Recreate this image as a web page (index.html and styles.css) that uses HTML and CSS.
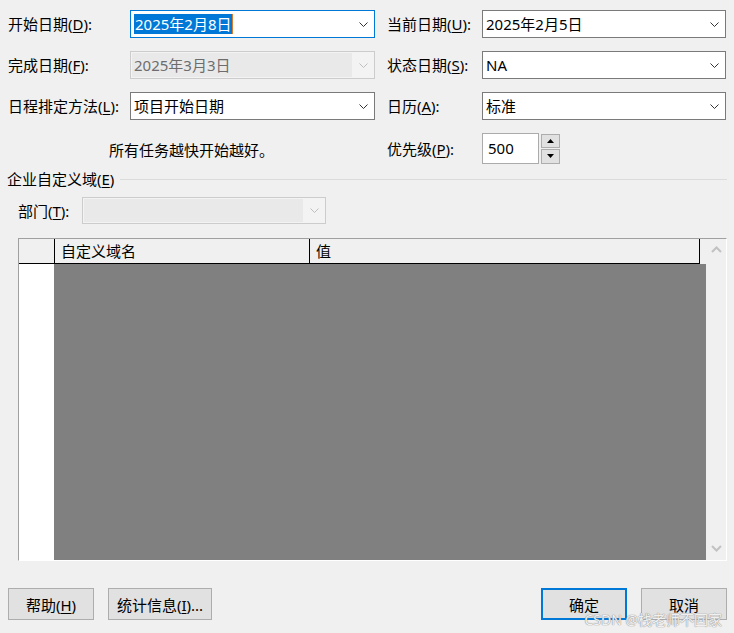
FILE: index.html
```html
<!DOCTYPE html>
<html lang="zh-CN">
  <head>
    <meta charset="UTF-8" />
    <meta name="viewport" content="width=device-width, initial-scale=1.0" />
    <title>项目信息</title>
    <link rel="stylesheet" href="styles.css">
  </head>
  <body>
    <div class="dialog">
      <div class="form-grid">
        <label class="lbl">开始日期(<u>D</u>):</label>
        <div class="combo focused">
          <span class="val"><span class="sel">2025年2月8日</span></span>
          <span class="arrow"><svg width="9" height="5" viewBox="0 0 9 5"><path d="M0.5 0.5 L4.5 4.5 L8.5 0.5" fill="none" stroke="#333" stroke-width="1"/></svg></span>
        </div>
        <label class="lbl right">当前日期(<u>U</u>):</label>
        <div class="combo">
          <span class="val">2025年2月5日</span>
          <span class="arrow"><svg width="9" height="5" viewBox="0 0 9 5"><path d="M0.5 0.5 L4.5 4.5 L8.5 0.5" fill="none" stroke="#333" stroke-width="1"/></svg></span>
        </div>

        <label class="lbl">完成日期(<u>F</u>):</label>
        <div class="combo disabled">
          <span class="val">2025年3月3日</span>
          <span class="arrow"><svg width="9" height="5" viewBox="0 0 9 5"><path d="M0.5 0.5 L4.5 4.5 L8.5 0.5" fill="none" stroke="#bfbfbf" stroke-width="1"/></svg></span>
        </div>
        <label class="lbl right">状态日期(<u>S</u>):</label>
        <div class="combo">
          <span class="val">NA</span>
          <span class="arrow"><svg width="9" height="5" viewBox="0 0 9 5"><path d="M0.5 0.5 L4.5 4.5 L8.5 0.5" fill="none" stroke="#333" stroke-width="1"/></svg></span>
        </div>

        <label class="lbl">日程排定方法(<u>L</u>):</label>
        <div class="combo">
          <span class="val">项目开始日期</span>
          <span class="arrow"><svg width="9" height="5" viewBox="0 0 9 5"><path d="M0.5 0.5 L4.5 4.5 L8.5 0.5" fill="none" stroke="#333" stroke-width="1"/></svg></span>
        </div>
        <label class="lbl right">日历(<u>A</u>):</label>
        <div class="combo">
          <span class="val">标准</span>
          <span class="arrow"><svg width="9" height="5" viewBox="0 0 9 5"><path d="M0.5 0.5 L4.5 4.5 L8.5 0.5" fill="none" stroke="#333" stroke-width="1"/></svg></span>
        </div>

        <div class="hint">所有任务越快开始越好。</div>
        <label class="lbl right">优先级(<u>P</u>):</label>
        <div class="spin-wrap">
          <div class="spin-input">500</div>
          <div class="spin-btns">
            <span class="spin-btn"><svg width="7" height="4" viewBox="0 0 7 4"><path d="M0 4 L3.5 0 L7 4 Z" fill="#000"/></svg></span>
            <span class="spin-btn"><svg width="7" height="4" viewBox="0 0 7 4"><path d="M0 0 L3.5 4 L7 0 Z" fill="#000"/></svg></span>
          </div>
        </div>
      </div>

      <div class="group-head">
        <span>企业自定义域(<u>E</u>)</span>
        <span class="group-line"></span>
      </div>

      <div class="dept-row">
        <label class="lbl dept-lbl">部门(<u>T</u>):</label>
        <div class="combo disabled dept">
          <span class="val"></span>
          <span class="arrow"><svg width="9" height="5" viewBox="0 0 9 5"><path d="M0.5 0.5 L4.5 4.5 L8.5 0.5" fill="none" stroke="#bfbfbf" stroke-width="1"/></svg></span>
        </div>
      </div>

      <div class="grid-box">
        <div class="grid-main">
          <div class="grid-head">
            <span class="hcell rowhead"></span>
            <span class="hcell col-name">自定义域名</span>
            <span class="hcell col-value">值</span>
            <span class="hcell filler"></span>
          </div>
          <div class="grid-body">
            <div class="body-rowhead"></div>
            <div class="body-fill"></div>
          </div>
        </div>
        <div class="vscroll">
          <svg width="11" height="7" viewBox="0 0 11 7"><path d="M1 6 L5.5 1.5 L10 6" fill="none" stroke="#c2c2c2" stroke-width="2"/></svg>
          <svg width="11" height="7" viewBox="0 0 11 7"><path d="M1 1 L5.5 5.5 L10 1" fill="none" stroke="#c2c2c2" stroke-width="2"/></svg>
        </div>
      </div>

      <div class="button-bar">
        <div class="btn-group">
          <button class="btn">帮助(<u>H</u>)</button>
          <button class="btn wide">统计信息(<u>I</u>)...</button>
        </div>
        <div class="btn-group">
          <button class="btn default">确定</button>
          <button class="btn">取消</button>
        </div>
      </div>

      <div class="watermark">CSDN @栈老师不回家</div>
    </div>
  </body>
</html>
```

FILE: styles.css
```css
:root {
  --dialog-bg: #f0f0f0;
  --border-dark: #7a7a7a;
  --border-disabled: #cccccc;
  --button-bg: #e1e1e1;
  --button-border: #adadad;
  --accent: #0078d7;
  --grid-gray: #808080;
}

* {
  box-sizing: border-box;
}

body {
  margin: 0;
  width: 734px;
  height: 633px;
  overflow: hidden;
  background-color: var(--dialog-bg);
  font-family: "Noto Sans", "Noto Sans CJK SC", sans-serif;
  font-size: 15px;
  color: #000;
}

.dialog {
  position: relative;
  height: 633px;
  padding: 10px 7px 0 8px;
}

u {
  text-decoration: underline;
  text-underline-offset: 2px;
}

.form-grid {
  display: grid;
  grid-template-columns: 122px 245px 107px 244px;
  grid-template-rows: 28px 28px 28px 31px;
  row-gap: 13px;
  align-items: center;
}

.form-grid .spin-wrap,
.form-grid .hint {
  margin-top: -1px;
}

.lbl {
  line-height: 20px;
  white-space: nowrap;
}

.lbl.right {
  padding-left: 12px;
}

.combo {
  display: flex;
  height: 28px;
  border: 1px solid var(--border-dark);
  background-color: #fff;
}

.combo .val {
  flex: 1;
  display: flex;
  align-items: center;
  padding-left: 3px;
  line-height: 20px;
  white-space: nowrap;
}

.combo .arrow {
  width: 22px;
  display: flex;
  align-items: center;
  justify-content: center;
}

.combo.focused {
  border-color: var(--accent);
}

.combo .sel {
  background-color: var(--accent);
  color: #fff;
  padding: 0 1px;
  border-right: 1px solid #e07a2a;
}

.combo.disabled {
  border-color: var(--border-disabled);
  background-color: #f3f3f3;
  color: #6d6d6d;
}

.combo.disabled .val {
  background-color: #e9e9e9;
  margin: 1px 0 1px 1px;
  padding-left: 2px;
}

.hint {
  grid-column: 1 / span 2;
  text-align: center;
  line-height: 20px;
  padding-top: 4px;
}

.spin-wrap {
  display: flex;
  gap: 2px;
  height: 31px;
}

.spin-input {
  width: 57px;
  border: 1px solid #ababab;
  background-color: #fff;
  padding-left: 5px;
  display: flex;
  align-items: center;
}

.spin-btns {
  display: flex;
  flex-direction: column;
  gap: 1px;
  padding-top: 1px;
}

.spin-btn {
  width: 19px;
  height: 15px;
  border: 1px solid var(--button-border);
  background-color: var(--button-bg);
  display: flex;
  align-items: center;
  justify-content: center;
}

.group-head {
  display: flex;
  align-items: center;
  gap: 6px;
  margin: 6px 0 0 -1px;
  line-height: 18px;
}

.group-line {
  flex: 1;
  height: 1px;
  background-color: #dcdcdc;
}

.dept-row {
  display: flex;
  align-items: center;
  margin-top: 9px;
  padding-left: 10px;
}

.dept-lbl {
  width: 64px;
}

.combo.dept {
  width: 244px;
  height: 27px;
}

.grid-box {
  display: flex;
  height: 323px;
  margin: 14px 0 0 10px;
  border: 1px solid;
  border-color: #a0a0a0 #ffffff #ffffff #a0a0a0;
}

.grid-main {
  flex: 1;
  display: flex;
  flex-direction: column;
}

.grid-head {
  display: flex;
  height: 25px;
  background-color: var(--dialog-bg);
}

.hcell {
  border-right: 1px solid #000;
  border-bottom: 1px solid #000;
  line-height: 22px;
  padding-left: 6px;
  padding-top: 1px;
  white-space: nowrap;
}

.hcell.rowhead {
  width: 36px;
}

.hcell.col-name {
  width: 255px;
}

.hcell.col-value {
  width: 390px;
}

.hcell.filler {
  flex: 1;
  border: none;
}

.grid-body {
  flex: 1;
  display: flex;
}

.body-rowhead {
  width: 35px;
  background-color: #fff;
}

.body-fill {
  flex: 1;
  background-color: var(--grid-gray);
}

.vscroll {
  width: 21px;
  background-color: var(--dialog-bg);
  display: flex;
  flex-direction: column;
  justify-content: space-between;
  align-items: center;
  padding: 7px 0 8px;
}

.button-bar {
  display: flex;
  justify-content: space-between;
  margin-top: 27px;
}

.btn-group {
  display: flex;
  gap: 14px;
}

.btn {
  width: 86px;
  height: 32px;
  border: 1px solid var(--button-border);
  background-color: var(--button-bg);
  font-family: inherit;
  font-size: 15px;
  color: #000;
  padding: 0;
}

.btn.wide {
  width: 104px;
}

.btn.default {
  border: 2px solid var(--accent);
}

.watermark {
  position: absolute;
  right: 12px;
  bottom: 4px;
  font-size: 14px;
  color: rgba(255, 255, 255, 0.9);
  text-shadow: 0 0 1px #8a8a8a, 0 0 1px #8a8a8a;
}
```
